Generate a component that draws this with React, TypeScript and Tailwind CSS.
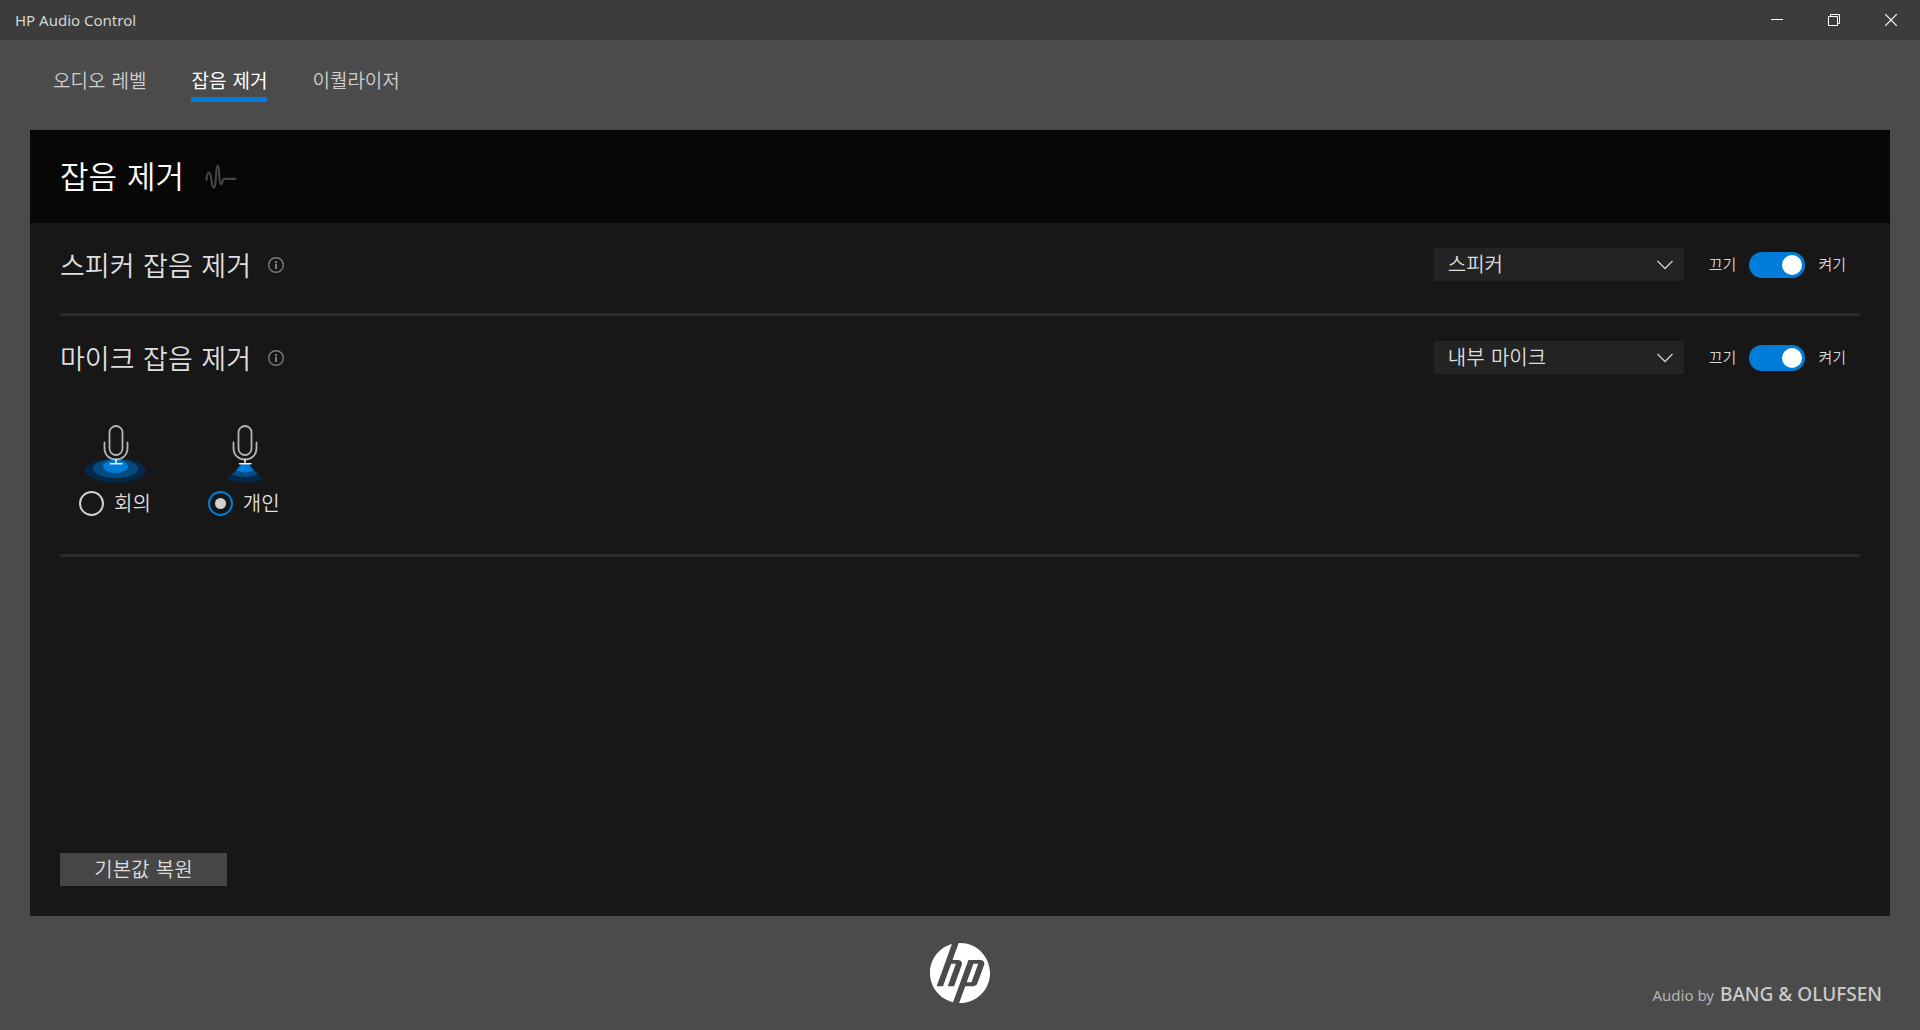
import React, { useState } from 'react';
import { SiHp } from 'react-icons/si';

const tabs = ['오디오 레벨', '잡음 제거', '이퀄라이저'];

const WaveIcon = () => (
  <svg className="w-8 h-7" viewBox="0 0 32 28" fill="none" stroke="#454545" strokeWidth="2.200" strokeLinecap="round" strokeLinejoin="round">
    <path d="M1.5 17C2 11.500 2.700 9.500 4 9.500C7 9.500 6 24.700 8.700 24.700C11.500 24.700 10.500 2.500 12.700 2.500C15 2.500 13.500 21.300 16 21.300C17.500 21.300 17.500 15.800 19 15.800H30.500" />
  </svg>
);

const InfoIcon = () => (
  <svg className="w-4 h-4" viewBox="0 0 16 16" fill="none" stroke="#7c7c7c">
    <circle cx="8" cy="8" r="7.300" strokeWidth="1.400" />
    <path d="M8 4v2M8 6.800v5.200" strokeWidth="2" />
  </svg>
);

const Mic = () => (
  <g fill="none" strokeLinecap="round">
    <rect x="24.500" y="1" width="13" height="29" rx="6.500" stroke="#b4b4b4" strokeWidth="1.800" />
    <path d="M19.500 17.500V23C19.500 30 24.500 34.500 31 34.500S42.500 30 42.500 23V17.500" stroke="#b4b4b4" strokeWidth="1.800" />
    <path d="M31 34.500V38.500M25.500 38.800H37" stroke="#e8f4ff" strokeWidth="1.500" />
  </g>
);

const ConferenceIcon = () => (
  <svg className="w-[62px] h-[58px]" viewBox="0 0 62 58">
    <ellipse cx="30.500" cy="45.500" rx="30.500" ry="12" fill="#03294a" />
    <ellipse cx="30.500" cy="43.500" rx="22.500" ry="9.500" fill="#054b80" />
    <ellipse cx="30.500" cy="41.500" rx="12.500" ry="6.500" fill="#007dd9" />
    <Mic />
  </svg>
);

const PersonalIcon = () => (
  <svg className="w-[62px] h-[58px]" viewBox="0 0 62 58">
    <path d="M27.500 39H34.500L49.500 54.500Q31 60 12.500 54.500Z" fill="#03294a" />
    <path d="M27.500 39H34.500L44 49.500Q31 54.500 18 49.500Z" fill="#054b80" />
    <path d="M27.500 39H34.500L39.500 45.500Q31 49.500 22.500 45.500Z" fill="#007dd9" />
    <Mic />
  </svg>
);

interface DeviceRowProps {
  id: string;
  title: string;
  options: string[];
}

const DeviceRow: React.FC<DeviceRowProps> = ({ id, title, options }) => {
  const [enabled, setEnabled] = useState(true);

  return (
    <div className="flex items-center justify-between pt-[25px]">
      <div className="flex items-center gap-[17px]">
        <h2 className="pt-1 text-[27px] leading-7 text-[#dedede]">{title}</h2>
        <button type="button" aria-label={`${title} 정보`}>
          <InfoIcon />
        </button>
      </div>
      <div className="flex items-center pr-[14px]">
        <div className="relative mr-[25px]">
          <select aria-label={title} className="appearance-none w-[250px] h-[33px] bg-[#232323] pl-[14px] pr-10 text-xl leading-8 text-[#dedede]">
            {options.map(option => (
              <option key={option}>{option}</option>
            ))}
          </select>
          <svg className="absolute right-[11px] top-3 w-4 h-[10px] pointer-events-none" viewBox="0 0 16 10" fill="none" stroke="#cfcfcf" strokeWidth="1.300">
            <path d="M.5 1L8 8.500L15.500 1" />
          </svg>
        </div>
        <label htmlFor={id} className="flex items-center gap-[13px] text-[15px] leading-6 text-[#d8d8d8]">
          <span>끄기</span>
          <input
            id={id}
            type="checkbox"
            role="switch"
            checked={enabled}
            onChange={e => setEnabled(e.target.checked)}
            className="appearance-none flex items-center w-14 h-[26px] rounded-full px-[3px] bg-[#5a5a5a] checked:bg-[#007dd9] before:content-[''] before:w-5 before:h-5 before:rounded-full before:bg-white checked:before:ml-auto"
          />
          <span>켜기</span>
        </label>
      </div>
    </div>
  );
};

const App: React.FC = () => {
  const [activeTab, setActiveTab] = useState('잡음 제거');
  const [mode, setMode] = useState('personal');

  const modes = [
    { id: 'conference', label: '회의', icon: <ConferenceIcon /> },
    { id: 'personal', label: '개인', icon: <PersonalIcon /> },
  ];

  return (
    <div className="min-h-screen flex flex-col bg-[#4b4b4b] font-['DejaVu_Sans','Noto_Sans_CJK_KR',sans-serif] font-[350]">
      <header className="h-10 flex items-center justify-between bg-[#3c3c3c] pl-[15px] pr-px">
        <h1 className="font-['Noto_Sans',sans-serif] font-normal text-[15px] leading-5 text-[#d4d4d4]">HP Audio Control</h1>
        <div className="flex text-white">
          <button type="button" aria-label="최소화" className="w-[57px] h-10 flex items-center justify-center">
            <svg className="w-3 h-3" viewBox="0 0 12 12" fill="none" stroke="currentColor">
              <path d="M0 5.500H12" />
            </svg>
          </button>
          <button type="button" aria-label="이전 크기로 복원" className="w-[57px] h-10 flex items-center justify-center">
            <svg className="w-3 h-3" viewBox="0 0 12 12" fill="none" stroke="currentColor">
              <path d="M.5 2.500H9.500V11.500H.5ZM2.500 2.500V.5H11.500V9.500H9.500" />
            </svg>
          </button>
          <button type="button" aria-label="닫기" className="w-[57px] h-10 flex items-center justify-center">
            <svg className="w-3 h-3" viewBox="0 0 12 12" fill="none" stroke="currentColor" strokeWidth="1.200">
              <path d="M0 0L12 12M12 0L0 12" />
            </svg>
          </button>
        </div>
      </header>

      <nav className="h-[90px] flex items-start gap-[45px] pl-[53px] pt-[26px]">
        {tabs.map(tab => (
          <button
            key={tab}
            type="button"
            onClick={() => setActiveTab(tab)}
            className={`text-[19px] leading-[31px] border-b-[5px] ${tab === activeTab ? 'border-[#007dd9] text-white font-normal' : 'border-transparent text-[#d0d0d0]'}`}
          >
            {tab}
          </button>
        ))}
      </nav>

      <main className="flex-1 flex flex-col mx-[30px] bg-[#171717]">
        <div className="h-[93px] flex items-center gap-[21px] bg-[#070707] px-[30px]">
          <h2 className="text-[31px] leading-10 text-white">잡음 제거</h2>
          <WaveIcon />
        </div>

        <div className="flex-1 flex flex-col px-[30px] pb-[30px]">
          <section className="pb-8 border-b-[3px] border-[#2a2a2a]">
            <DeviceRow id="speaker-noise" title="스피커 잡음 제거" options={['스피커']} />
          </section>

          <section className="pb-[35px] border-b-[3px] border-[#2a2a2a]">
            <DeviceRow id="mic-noise" title="마이크 잡음 제거" options={['내부 마이크']} />
            <div className="flex gap-[57px] pt-[51px] pl-[19px]">
              {modes.map(({ id, label, icon }) => (
                <label key={id} className="flex flex-col items-start gap-1">
                  <span className="pl-[6px]">{icon}</span>
                  <span className="flex items-center gap-[10px] text-xl text-[#dedede]">
                    <input
                      type="radio"
                      name="mic-mode"
                      checked={mode === id}
                      onChange={() => setMode(id)}
                      className="appearance-none flex items-center justify-center w-[25px] h-[25px] rounded-full border-[2px] border-[#d0d0d0] checked:border-[#007dd9] checked:before:content-[''] checked:before:w-[11px] checked:before:h-[11px] checked:before:rounded-full checked:before:bg-[#d0d0d0]"
                    />
                    <span className="pt-[2px] leading-[30px]">{label}</span>
                  </span>
                </label>
              ))}
            </div>
          </section>

          <button type="button" className="mt-auto self-start w-[167px] h-[33px] bg-[#464646] text-xl leading-8 text-[#dedede]">
            기본값 복원
          </button>
        </div>
      </main>

      <footer className="h-[114px] grid grid-cols-3 pt-[27px]">
        <SiHp className="col-start-2 justify-self-center w-[60px] h-[60px] text-white" title="HP" />
        <p className="justify-self-end self-end pr-[38px] pb-[21px] flex items-baseline gap-[6px] font-['Noto_Sans',sans-serif] font-normal leading-7 text-[#b4b4b4]">
          <span className="text-[15px]">Audio by</span>
          <span className="text-[19px] leading-7 font-medium text-[#cccccc]">BANG &amp; OLUFSEN</span>
        </p>
      </footer>
    </div>
  );
};

export default App;
